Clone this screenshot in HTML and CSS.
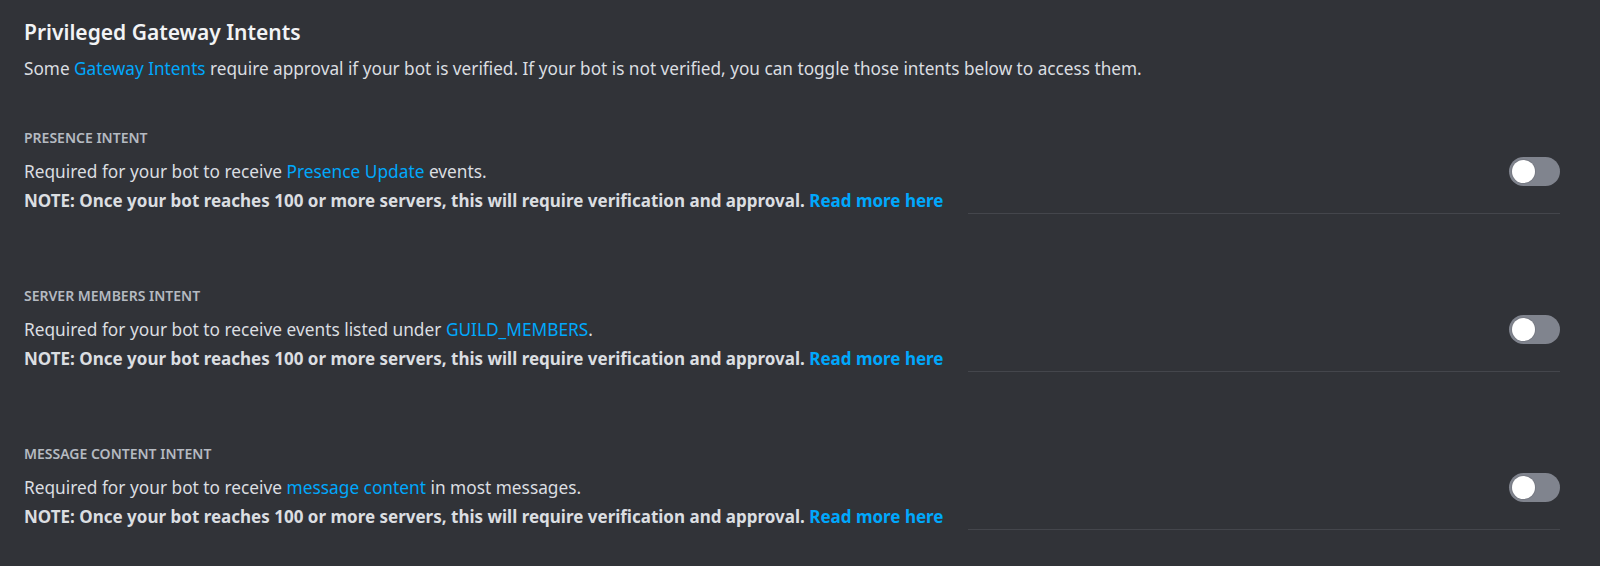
FILE: index.html
```html
<!DOCTYPE html>
<html lang="en">
<head>
<meta charset="utf-8">
<title>Privileged Gateway Intents</title>
<link rel="stylesheet" href="styles.css">
</head>
<body>
<main class="page">
  <h2 class="title">Privileged Gateway Intents</h2>
  <p class="desc">Some <a class="link" href="#">Gateway Intents</a> require approval if your bot is verified. If your bot is not verified, you can toggle those intents below to access them.</p>

  <section class="intent">
    <h3 class="label">PRESENCE INTENT</h3>
    <div class="row">
      <div class="text">
        <div class="line">Required for your bot to receive <a class="link" href="#">Presence Update</a> events.</div>
        <div class="line note">NOTE: Once your bot reaches 100 or more servers, this will require verification and approval. <a class="link" href="#">Read more here</a></div>
      </div>
      <span class="toggle"><span class="knob"></span></span>
    </div>
    <div class="divider"></div>
  </section>

  <section class="intent">
    <h3 class="label">SERVER MEMBERS INTENT</h3>
    <div class="row">
      <div class="text">
        <div class="line">Required for your bot to receive events listed under <a class="link" href="#">GUILD_MEMBERS</a>.</div>
        <div class="line note">NOTE: Once your bot reaches 100 or more servers, this will require verification and approval. <a class="link" href="#">Read more here</a></div>
      </div>
      <span class="toggle"><span class="knob"></span></span>
    </div>
    <div class="divider"></div>
  </section>

  <section class="intent">
    <h3 class="label">MESSAGE CONTENT INTENT</h3>
    <div class="row">
      <div class="text">
        <div class="line">Required for your bot to receive <a class="link" href="#">message content</a> in most messages.</div>
        <div class="line note">NOTE: Once your bot reaches 100 or more servers, this will require verification and approval. <a class="link" href="#">Read more here</a></div>
      </div>
      <span class="toggle"><span class="knob"></span></span>
    </div>
    <div class="divider"></div>
  </section>
</main>
</body>
</html>
```
FILE: styles.css
```css
html, body {
  margin: 0;
  padding: 0;
  background: #313338;
}
body {
  font-family: "Noto Sans", "DejaVu Sans", sans-serif;
  color: #dbdee1;
}
.page {
  padding: 18px 40px 0 24px;
}
.title {
  margin: 0;
  font-size: 21px;
  line-height: 28px;
  font-weight: 600;
  color: #f2f3f5;
}
.desc {
  margin: 11px 0 0;
  font-size: 17.2px;
  line-height: 24px;
  color: #dbdee1;
}
.link {
  color: #00a8fc;
  text-decoration: none;
}
.intent {
  margin-top: 74px;
}
.intent:first-of-type {
  margin-top: 49px;
}
.label {
  margin: 0;
  font-size: 14px;
  line-height: 16px;
  font-weight: 600;
  color: #b5bac1;
}
.row {
  display: flex;
  justify-content: space-between;
  align-items: flex-start;
  margin-top: 11px;
}
.line {
  font-size: 17.3px;
  line-height: 29px;
  white-space: nowrap;
}
.note {
  font-size: 17px;
  font-weight: 700;
}
.toggle {
  display: flex;
  align-items: center;
  width: 51px;
  height: 29px;
  box-sizing: border-box;
  padding: 0 3px;
  border-radius: 15px;
  background: #80848e;
  flex: none;
}
.knob {
  width: 23px;
  height: 23px;
  border-radius: 50%;
  background: #ffffff;
  box-shadow: 0 0 0 1px rgba(0, 0, 0, 0.08);
}
.divider {
  height: 1px;
  margin: -2px 0 0 944px;
  background: #44464c;
}
```
